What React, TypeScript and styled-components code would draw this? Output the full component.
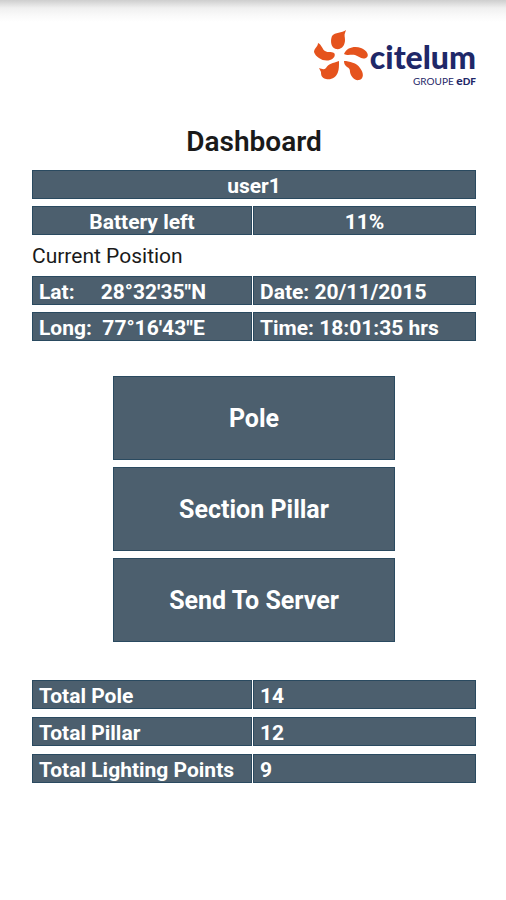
import React from "react";
import styled, { createGlobalStyle } from "styled-components";

const slate = "#4c5f6e";
const edge = "#2a4a60";

const GlobalStyle = createGlobalStyle`
  *, *::before, *::after { box-sizing: border-box; }
  body {
    margin: 0;
    background: #fff;
    color: #1a1a1a;
    font-family: Roboto, "Liberation Sans", sans-serif;
  }
`;

const Screen = styled.main`
  display: flex;
  flex-direction: column;
  min-height: 100vh;
  padding: 28px 30px 32px 32px;
  background: linear-gradient(#cecece, #f0f0f0 8px, #fafafa 16px, #fff 22px) no-repeat;
`;

const Header = styled.header`
  display: flex;
  justify-content: flex-end;
`;

const Brand = styled.div`
  display: flex;
  align-items: flex-start;
  color: #1f2868;
`;

const Mark = styled.svg`
  width: 60px;
  height: 56px;
  fill: #e5531d;
`;

const Wordmark = styled.div`
  display: flex;
  flex-direction: column;
  align-items: flex-end;
  padding-top: 10px;
`;

const BrandName = styled.span`
  font: 900 32px/38px Lato, "Open Sans", sans-serif;
`;

const BrandGroup = styled.span`
  font: 400 10px/10px Lato, "Open Sans", sans-serif;
`;

const Edf = styled.b`
  font-weight: 900;
`;

const BigE = styled.span`
  font-size: 12px;
`;

const Title = styled.h1`
  margin: 40px 0 12px;
  font-size: 28px;
  line-height: 32px;
  font-weight: 600;
  text-align: center;
`;

const Caption = styled.h2`
  margin: 7px 0 5px;
  font-size: 21px;
  line-height: 29px;
  font-weight: 400;
`;

const Table = styled.table`
  display: block;
  width: 100%;
`;

const Rows = styled.tbody<{ $gap: number }>`
  display: grid;
  gap: ${(p) => p.$gap}px;
`;

const Row = styled.tr<{ $single?: boolean }>`
  display: grid;
  grid-template-columns: ${(p) => (p.$single ? "1fr" : "220fr 223fr")};
  gap: 1px;
`;

const Cell = styled.td<{ $center?: boolean }>`
  height: 29px;
  padding: 1px 6px 0;
  border: 1px solid ${edge};
  background: ${slate};
  color: #fff;
  font-size: 21px;
  line-height: 28px;
  font-weight: 700;
  white-space: pre;
  text-align: ${(p) => (p.$center ? "center" : "left")};
`;

const Actions = styled.nav`
  display: flex;
  flex-direction: column;
  align-self: center;
  gap: 7px;
  width: 64%;
  padding: 0 1px;
  margin: 35px 0 38px;
`;

const Action = styled.button`
  height: 84px;
  padding: 2px 6px 0;
  border: 1px solid ${edge};
  background: ${slate};
  color: #fff;
  font: 700 25px/32px Roboto, "Liberation Sans", sans-serif;
  cursor: pointer;
`;

const totals: [string, string][] = [
  ["Total Pole", "14"],
  ["Total Pillar", "12"],
  ["Total Lighting Points", "9"],
];

const actions = ["Pole", "Section Pillar", "Send To Server"];

function Logo() {
  return (
    <Brand>
      <Mark viewBox="0 0 60 56" aria-hidden="true">
        <path d="M36 2C32 5 25 4 22 8C20 13 21 20 26 21C32 22 35 17 35 12C35 9 34 7 35 5Z" />
        <path d="M8 15C8 19 4 20 4 24C6 30 14 34 20 32C24 31 26 27 24 25C21 23 18 25 15 23C12 21 12 17 8 15Z" />
        <path d="M34 26C37 19 45 18 51 20C57 22 60 28 56 30C51 32 49 28 45 27C41 26 38 28 34 26Z" />
        <path d="M34 33C39 33 47 35 50 40C54 45 54 51 49 52C45 53 41 49 40 44C40 41 39 40 37 39C35 37 34 36 34 33Z" />
        <path d="M29 33C29 38 29 41 28 44C26 50 21 52 16 51C11 50 11 46 11 44L9 40C12 41 14 42 16 40C18 36 23 35 29 33Z" />
      </Mark>
      <Wordmark>
        <BrandName>citelum</BrandName>
        <BrandGroup>
          GROUPE{" "}
          <Edf>
            <BigE>e</BigE>DF
          </Edf>
        </BrandGroup>
      </Wordmark>
    </Brand>
  );
}

export default function App() {
  return (
    <>
      <GlobalStyle />
      <Screen>
        <Header>
          <Logo />
        </Header>
        <Title>Dashboard</Title>
        <Table aria-label="Session">
          <Rows $gap={7}>
            <Row $single>
              <Cell $center>user1</Cell>
            </Row>
            <Row>
              <Cell as="th" scope="row" $center>Battery left</Cell>
              <Cell $center>11%</Cell>
            </Row>
          </Rows>
        </Table>
        <Caption id="position">Current Position</Caption>
        <Table aria-labelledby="position">
          <Rows $gap={7}>
            <Row>
              <Cell>{"Lat:     28°32'35\"N"}</Cell>
              <Cell>Date: 20/11/2015</Cell>
            </Row>
            <Row>
              <Cell>{"Long:  77°16'43\"E"}</Cell>
              <Cell>Time: 18:01:35 hrs</Cell>
            </Row>
          </Rows>
        </Table>
        <Actions aria-label="Actions">
          {actions.map((label) => (
            <Action key={label} type="button">{label}</Action>
          ))}
        </Actions>
        <Table aria-label="Totals">
          <Rows $gap={8}>
            {totals.map(([label, value]) => (
              <Row key={label}>
                <Cell as="th" scope="row">{label}</Cell>
                <Cell>{value}</Cell>
              </Row>
            ))}
          </Rows>
        </Table>
      </Screen>
    </>
  );
}
